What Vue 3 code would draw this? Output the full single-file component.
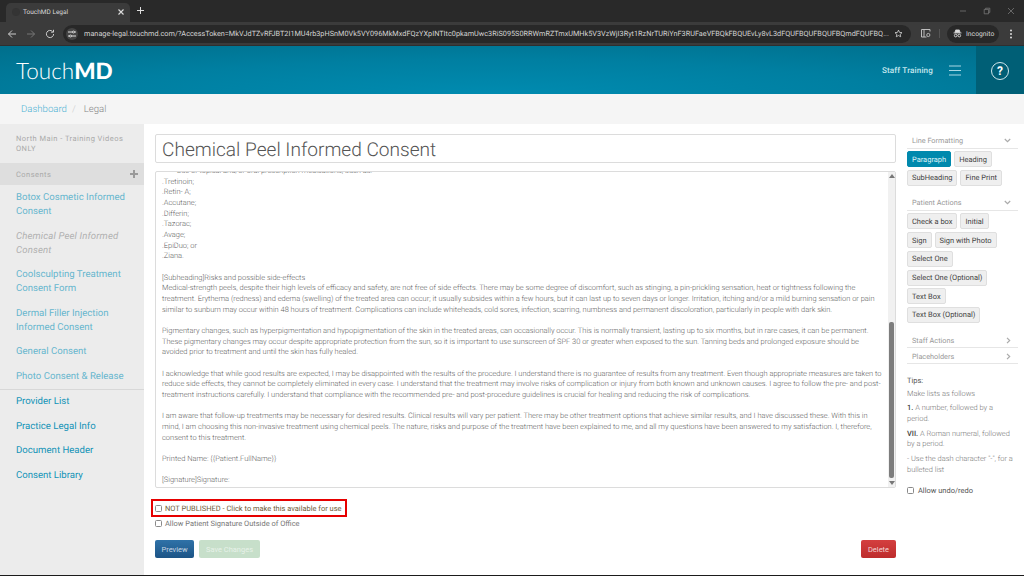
<script setup>
const consents = [
  { t: 'Botox Cosmetic Informed Consent' },
  { t: 'Chemical Peel Informed Consent', off: true },
  { t: 'Coolsculpting Treatment Consent Form' },
  { t: 'Dermal Filler Injection Informed Consent' },
  { t: 'General Consent' },
  { t: 'Photo Consent & Release' }
]
const extras = ['Provider List', 'Practice Legal Info', 'Document Header', 'Consent Library']
const formatting = [
  { t: 'Paragraph', on: true }, { t: 'Heading' }, { t: 'SubHeading' }, { t: 'Fine Print' }
]
const actions = ['Check a box', 'Initial', 'Sign', 'Sign with Photo', 'Select One', 'Select One (Optional)', 'Text Box', 'Text Box (Optional)']
const url = 'manage-legal.touchmd.com/?AccessToken=MkVJdTZvRFJBT2I1MU4rb3pHSnM0Vk5VY096MkMxdFQzYXpINTItc0pkamUwc3RiS095S0RRWmRZTmxUMHk5V3VzWjI3Ryt1RzNrTURiYnF3RUFaeVFBQkFBQUEvLy8vL3dFQUFBQUFBQUFBQmdFQUFBQ...'
const body = `        Use of topical and/or oral prescription medications, such as:
.Tretinoin;
.Retin- A;
.Accutane;
.Differin;
.Tazorac;
.Avage;
.EpiDuo; or
.Ziana.

[Subheading]Risks and possible side-effects
Medical-strength peels, despite their high levels of efficacy and safety, are not free of side effects. There may be some degree of discomfort, such as stinging, a pin-prickling sensation, heat or tightness following the
treatment. Erythema (redness) and edema (swelling) of the treated area can occur; it usually subsides within a few hours, but it can last up to seven days or longer. Irritation, itching and/or a mild burning sensation or pain
similar to sunburn may occur within 48 hours of treatment. Complications can include whiteheads, cold sores, infection, scarring, numbness and permanent discoloration, particularly in people with dark skin.

Pigmentary changes, such as hyperpigmentation and hypopigmentation of the skin in the treated areas, can occasionally occur. This is normally transient, lasting up to six months, but in rare cases, it can be permanent.
These pigmentary changes may occur despite appropriate protection from the sun, so it is important to use sunscreen of SPF 30 or greater when exposed to the sun. Tanning beds and prolonged exposure should be
avoided prior to treatment and until the skin has fully healed.

I acknowledge that while good results are expected, I may be disappointed with the results of the procedure. I understand there is no guarantee of results from any treatment. Even though appropriate measures are taken to
reduce side effects, they cannot be completely eliminated in every case. I understand that the treatment may involve risks of complication or injury from both known and unknown causes. I agree to follow the pre- and post-
treatment instructions carefully. I understand that compliance with the recommended pre- and post-procedure guidelines is crucial for healing and reducing the risk of complications.

I am aware that follow-up treatments may be necessary for desired results. Clinical results will vary per patient. There may be other treatment options that achieve similar results, and I have discussed these. With this in
mind, I am choosing this non-invasive treatment using chemical peels. The nature, risks and purpose of the treatment have been explained to me, and all my questions have been answered to my satisfaction. I, therefore,
consent to this treatment.

Printed Name: {{Patient.FullName}}

[Signature]Signature:`
</script>

<template>
  <div class="page">
    <div class="tabstrip">
      <div class="tab">
        <span class="favicon"></span>
        <span class="tabtitle">TouchMD Legal</span>
        <svg class="tabclose" width="8" height="8" viewBox="0 0 8 8"><path d="M1.5 1.5l5 5M6.5 1.5l-5 5" stroke="#ddd" stroke-width="1.1"/></svg>
      </div>
      <svg class="newtab" width="9" height="9" viewBox="0 0 9 9"><path d="M4.5 1v7M1 4.5h7" stroke="#ddd" stroke-width="1"/></svg>
      <div class="winctl">
        <svg width="8" height="8" viewBox="0 0 8 8"><path d="M1 4h6" stroke="#777" stroke-width=".8"/></svg>
        <svg width="8" height="8" viewBox="0 0 8 8"><path d="M1.2 2.4h4.4v4.4H1.2zM2.6 2.4V1.2h4.2v4.2H5.6" fill="none" stroke="#777" stroke-width=".8"/></svg>
        <svg width="8" height="8" viewBox="0 0 8 8"><path d="M1 1l6 6M7 1L1 7" stroke="#777" stroke-width=".8"/></svg>
      </div>
    </div>

    <div class="toolbar">
      <svg class="nav" width="10" height="10" viewBox="0 0 10 10"><path d="M9 5H1.5M5 1.5L1.5 5 5 8.500" fill="none" stroke="#ccc" stroke-width="1"/></svg>
      <svg class="nav" width="10" height="10" viewBox="0 0 10 10"><path d="M1 5h7.500M5 1.500L8.500 5 5 8.500" fill="none" stroke="#777" stroke-width="1"/></svg>
      <svg class="nav" width="10" height="10" viewBox="0 0 10 10"><path d="M8.600 5a3.600 3.600 0 1 1-1-2.500M8.500 .8v2.400H6.100" fill="none" stroke="#ccc" stroke-width="1"/></svg>
      <div class="omnibox">
        <span class="siteinfo">
          <svg width="8" height="8" viewBox="0 0 8 8"><path d="M0 2h5M0 6h2M3 6h5M6 2h2" stroke="#ddd" stroke-width="1"/><circle cx="5.500" cy="2" r="1" fill="none" stroke="#ddd" stroke-width=".8"/><circle cx="2.500" cy="6" r="1" fill="none" stroke="#ddd" stroke-width=".8"/></svg>
        </span>
        <span class="url">{{ url }}</span>
        <svg width="9" height="9" viewBox="0 0 24 24"><path d="M12 3l2.800 6 6.500.8-4.800 4.400 1.300 6.500L12 17.400l-5.800 3.300 1.300-6.500L2.700 9.800l6.500-.8z" fill="none" stroke="#ddd" stroke-width="2"/></svg>
      </div>
      <svg class="sidepanel" width="10" height="9" viewBox="0 0 10 9"><path d="M.5 .5h8.500v2M.5 .5v7.500h5M3 .5v7.500" fill="none" stroke="#ccc" stroke-width=".9"/><circle cx="7.300" cy="6" r="1.600" fill="none" stroke="#ccc" stroke-width=".8"/></svg>
      <span class="tooldiv"></span>
      <div class="incog">
        <svg width="9" height="9" viewBox="0 0 10 10"><path d="M3 1h4l1 3H2zM.5 4.400h9" fill="#ddd" stroke="#ddd" stroke-width=".8"/><circle cx="3" cy="7.300" r="1.500" fill="none" stroke="#ddd"/><circle cx="7" cy="7.300" r="1.500" fill="none" stroke="#ddd"/></svg>
        <span>Incognito</span>
      </div>
      <svg class="kebab" width="4" height="10" viewBox="0 0 4 10"><circle cx="2" cy="1.500" r="1" fill="#ddd"/><circle cx="2" cy="5" r="1" fill="#ddd"/><circle cx="2" cy="8.500" r="1" fill="#ddd"/></svg>
    </div>

    <header class="appbar">
      <div class="logo">Touch<b>MD</b></div>
      <div class="bar-right">
        <span class="staff">Staff Training</span>
        <svg class="burger" width="12" height="11" viewBox="0 0 12 11"><path d="M0 1h12M0 5.500h12M0 10h12" stroke="#a9d8e4" stroke-width="1"/></svg>
        <div class="helpbox"><span class="helpcircle">?</span></div>
      </div>
    </header>

    <nav class="crumbs">
      <a>Dashboard</a><span class="sep">/</span><span class="cur">Legal</span>
    </nav>

    <div class="content">
      <aside class="side">
        <div class="clinic">North Main - Training Videos ONLY</div>
        <div class="sechead"><span>Consents</span><b class="plus"></b></div>
        <ul class="consents">
          <li v-for="c in consents" :key="c.t" :class="{ off: c.off }">{{ c.t }}</li>
        </ul>
        <ul class="extras">
          <li v-for="e in extras" :key="e">{{ e }}</li>
        </ul>
      </aside>

      <main class="main">
        <div class="title">Chemical Peel Informed Consent</div>
        <div class="editor">
          <div class="editortext">{{ body }}</div>
          <div class="scrollbar">
            <svg class="arrow up" width="6" height="4" viewBox="0 0 6 4"><path d="M3 0l3 4H0z" fill="#777"/></svg>
            <span class="thumb"></span>
            <svg class="arrow down" width="6" height="4" viewBox="0 0 6 4"><path d="M0 0h6L3 4z" fill="#777"/></svg>
          </div>
        </div>
        <label class="check published"><input type="checkbox" />NOT PUBLISHED - Click to make this available for use</label>
        <label class="check plain"><input type="checkbox" />Allow Patient Signature Outside of Office</label>
        <div class="actions">
          <button class="btn preview">Preview</button>
          <button class="btn save">Save Changes</button>
          <button class="btn delete">Delete</button>
        </div>
      </main>

      <aside class="tools">
        <div class="toolhead"><span>Line Formatting</span><svg width="7" height="5" viewBox="0 0 7 5"><path d="M.8 1l2.700 2.700L6.200 1" fill="none" stroke="#aaa" stroke-width="1.200"/></svg></div>
        <div class="btnwrap">
          <button v-for="f in formatting" :key="f.t" class="tool" :class="{ on: f.on }">{{ f.t }}</button>
        </div>
        <div class="toolhead second"><span>Patient Actions</span><svg width="7" height="5" viewBox="0 0 7 5"><path d="M.8 1l2.700 2.700L6.200 1" fill="none" stroke="#aaa" stroke-width="1.200"/></svg></div>
        <div class="btnwrap">
          <button v-for="a in actions" :key="a" class="tool">{{ a }}</button>
        </div>
        <div class="closedgroup">
          <div class="toolhead closed"><span>Staff Actions</span><svg width="5" height="7" viewBox="0 0 5 7"><path d="M1 .8l2.700 2.700L1 6.200" fill="none" stroke="#aaa" stroke-width="1.200"/></svg></div>
          <div class="toolhead closed"><span>Placeholders</span><svg width="5" height="7" viewBox="0 0 5 7"><path d="M1 .8l2.700 2.700L1 6.200" fill="none" stroke="#aaa" stroke-width="1.200"/></svg></div>
        </div>
        <div class="tips">
          <div class="tipshead">Tips:</div>
          <p class="firsttip">Make lists as follows</p>
          <p><b>1.</b> A number, followed by a period.</p>
          <p><b>VII.</b> A Roman numeral, followed by a period.</p>
          <p>- Use the dash character "-", for a bulleted list</p>
        </div>
        <label class="check undo"><input type="checkbox" />Allow undo/redo</label>
      </aside>
    </div>
    <div class="blackline"></div>
  </div>
</template>

<style scoped>
.page {
  width: 1024px;
  height: 576px;
  overflow: hidden;
  display: flex;
  flex-direction: column;
  background: #fff;
  font-family: Roboto, "Liberation Sans", sans-serif;
  text-rendering: geometricPrecision;
}
.tabstrip {
  height: 22px;
  flex: none;
  background: #292929;
  display: flex;
  align-items: flex-end;
  padding-left: 6px;
}
.tab {
  width: 124px;
  height: 19px;
  background: #3b3b3b;
  border-radius: 5px 5px 0 0;
  display: flex;
  align-items: center;
  padding: 0 5px 2px 6px;
  box-sizing: border-box;
}
.favicon {
  width: 8px;
  height: 8px;
  border-radius: 50%;
  background: #343434;
  margin-right: 3px;
}
.tabtitle {
  flex: 1;
  font-size: 6.500px;
  color: #d8d8d8;
}
.newtab {
  margin: 0 0 7px 6px;
}
.winctl {
  margin-left: auto;
  height: 22px;
  display: flex;
  align-items: center;
  gap: 16px;
  padding-right: 9px;
}
.toolbar {
  height: 24px;
  flex: none;
  background: #3b3b3b;
  display: flex;
  align-items: center;
  padding-left: 7px;
  border-bottom: 1px solid #2f2f2f;
  box-sizing: border-box;
}
.nav {
  margin-right: 9px;
}
.omnibox {
  width: 848px;
  height: 18px;
  margin-left: -1px;
  border-radius: 9px;
  background: #282828;
  display: flex;
  align-items: center;
  padding: 0 8px 0 3px;
  box-sizing: border-box;
}
.siteinfo {
  width: 12px;
  height: 12px;
  border-radius: 50%;
  background: #444;
  display: flex;
  align-items: center;
  justify-content: center;
  margin-right: 6px;
}
.url {
  width: 806px;
  margin-right: 4px;
  font-size: 7.300px;
  color: #d4d4d4;
  white-space: nowrap;
  overflow: hidden;
}
.sidepanel {
  margin-left: 10px;
}
.tooldiv {
  width: 1px;
  height: 9px;
  background: #555;
  margin: 0 7px 0 8px;
}
.incog {
  width: 52px;
  height: 18px;
  border-radius: 9px;
  background: #282828;
  display: flex;
  align-items: center;
  gap: 4px;
  padding-left: 6px;
  box-sizing: border-box;
  font-size: 6.800px;
  color: #d8d8d8;
}
.kebab {
  margin-left: 10px;
}
.appbar {
  height: 48px;
  flex: none;
  background: radial-gradient(ellipse 70% 130% at 48% 100%, #008bb0 0%, #007fa1 55%, #00708d 100%);
  display: flex;
  align-items: center;
  padding-left: 16px;
}
.logo {
  font-family: Lato, sans-serif;
  font-weight: 300;
  font-size: 22.500px;
  color: #fff;
}
.logo b {
  font-weight: 900;
}
.bar-right {
  margin-left: auto;
  display: flex;
  align-items: center;
}
.staff {
  font-size: 8.100px;
  font-weight: 500;
  letter-spacing: .15px;
  color: #c5e8ef;
}
.burger {
  margin: 0 15px 0 16px;
}
.helpbox {
  width: 48px;
  height: 49px;
  margin-bottom: -1px;
  background: #005f76;
  display: flex;
  align-items: center;
  justify-content: center;
}
.helpcircle {
  width: 16px;
  height: 16px;
  border: 1px solid #cfe6ec;
  border-radius: 50%;
  display: flex;
  align-items: center;
  justify-content: center;
  font-size: 12px;
  font-weight: 700;
  color: #fff;
}
.crumbs {
  height: 30px;
  flex: none;
  box-sizing: border-box;
  background: #f5f5f5;
  display: flex;
  align-items: center;
  padding: 1px 0 0 21px;
  font-size: 9.600px;
  font-weight: 300;
}
.crumbs a {
  color: #4fb3d4;
}
.sep {
  margin: 0 8px 0 5px;
  color: #ccc;
}
.cur {
  color: #888;
}
.content {
  flex: 1;
  min-height: 0;
  display: flex;
}
.side {
  width: 144px;
  flex: none;
  background: #ececec;
  font-size: 9.600px;
}
.clinic {
  padding: 10px 16px 11px;
  height: 39px;
  box-sizing: border-box;
  font-size: 7.500px;
  line-height: 9.500px;
  letter-spacing: .45px;
  color: #aaa;
}
.sechead {
  height: 22px;
  background: #dedede;
  display: flex;
  align-items: center;
  justify-content: space-between;
  padding: 0 6px 0 16px;
  font-size: 7.500px;
  letter-spacing: .45px;
  color: #aaa;
}
.plus {
  width: 8px;
  height: 8px;
  background:
    linear-gradient(#9a9a9a, #9a9a9a) center / 8px 2px no-repeat,
    linear-gradient(#9a9a9a, #9a9a9a) center / 2px 8px no-repeat;
}
ul {
  list-style: none;
  margin: 0;
  padding: 0;
}
.consents {
  padding: 1px 0 0;
  border-bottom: 1px solid #d8d8d8;
}
.consents li {
  padding: 5.250px 16px;
  line-height: 14px;
  color: #66b6ce;
}
.consents li.off {
  font-style: italic;
  letter-spacing: .15px;
  color: #b0b0b0;
}
.extras li {
  padding: 5.250px 16px;
  line-height: 14px;
  color: #1293b7;
}
.main {
  width: 752px;
  flex: none;
  padding: 10px 0 0 11px;
  box-sizing: border-box;
}
.title {
  width: 741px;
  height: 29px;
  box-sizing: border-box;
  border: 1px solid #dcdcdc;
  border-radius: 2px;
  padding-left: 6px;
  font-size: 19.100px;
  line-height: 29px;
  font-weight: 300;
  color: #555;
}
.editor {
  position: relative;
  width: 741px;
  height: 317px;
  margin-top: 8px;
  box-sizing: border-box;
  border: 1px solid #dcdcdc;
  border-radius: 2px;
  overflow: hidden;
}
.editortext {
  margin: -6px 0 0 6px;
  font-size: 7.470px;
  line-height: 10.670px;
  font-weight: 300;
  color: #5f5f5f;
  white-space: pre;
}
.scrollbar {
  position: absolute;
  top: 0;
  right: 0;
  bottom: 0;
  width: 7px;
  background: #f1f1f1;
}
.thumb {
  position: absolute;
  top: 150px;
  left: 1px;
  width: 5px;
  height: 156px;
  background: #7d7d7d;
  border-radius: 2px;
}
.arrow {
  position: absolute;
  left: .5px;
}
.arrow.up { top: 2px; }
.arrow.down { bottom: 2px; }
.check {
  display: flex;
  align-items: center;
  font-size: 7.470px;
  color: #777;
  white-space: nowrap;
}
.check input {
  appearance: none;
  width: 7px;
  height: 7px;
  margin: 0 3px 0 0;
  border: 1px solid #8a8a8a;
  border-radius: 1.500px;
  background: #fff;
  flex: none;
}
.published {
  height: 14px;
  margin-top: 13px;
  color: #6f5d3a;
  outline: 2.500px solid #e60000;
  width: 192px;
  margin-left: -2px;
  padding-left: 2px;
  box-sizing: border-box;
}
.plain {
  height: 11px;
  margin-top: 3px;
}
.actions {
  width: 741px;
  display: flex;
  gap: 5px;
  margin-top: 11px;
}
.btn {
  height: 18px;
  padding: 0;
  border: 0;
  border-radius: 2px;
  font: 400 7.470px Roboto, sans-serif;
}
.preview {
  width: 39px;
  background: linear-gradient(#2f72a8, #1c5486);
  color: #c5d6e3;
}
.save {
  width: 61px;
  background: #c7dfca;
  color: #e8f2e9;
}
.delete {
  width: 35px;
  margin-left: auto;
  background: linear-gradient(#d43f3f, #bd2c2c);
  color: #f3d4d4;
}
.tools {
  width: 111px;
  flex: none;
  margin-left: 11px;
  padding-top: 11px;
}
.toolhead {
  height: 11px;
  display: flex;
  align-items: center;
  justify-content: space-between;
  padding: 0 7px 2px 5px;
  border-bottom: 1px solid #e6e6e6;
  font-size: 7.300px;
  color: #999;
}
.toolhead.second {
  margin-top: 11.800px;
}
.closedgroup {
  margin-top: 8.500px;
}
.toolhead.closed {
  padding: 3.500px 7px 1px 5px;
}
.btnwrap {
  width: 105px;
  display: flex;
  flex-wrap: wrap;
  gap: 2.700px 3px;
  margin-top: 2px;
}
.tool {
  height: 16px;
  padding: 0 4px;
  border: 1px solid #dfdfdf;
  border-radius: 2px;
  background: #efefef;
  font: 400 7.470px Roboto, sans-serif;
  text-rendering: geometricPrecision;
  color: #444;
  white-space: nowrap;
}
.tool.on {
  background: #0089ad;
  border-color: #0089ad;
  color: #dff3f7;
}
.tips {
  width: 108px;
  margin-top: 11.200px;
  font-size: 7.470px;
  line-height: 10.600px;
  color: #777;
  font-weight: 300;
}
.tipshead {
  color: #555;
  font-weight: 400;
}
.tips p {
  margin: 4.200px 0 0;
}
.tips p.firsttip {
  margin-top: 2.400px;
}
.tips b {
  font-weight: 500;
  color: #444;
}
.undo {
  margin-top: 10.500px;
  color: #555;
}
.undo input {
  margin-right: 4px;
}
.blackline {
  height: 1px;
  flex: none;
  background: #1b1b1b;
}
</style>
